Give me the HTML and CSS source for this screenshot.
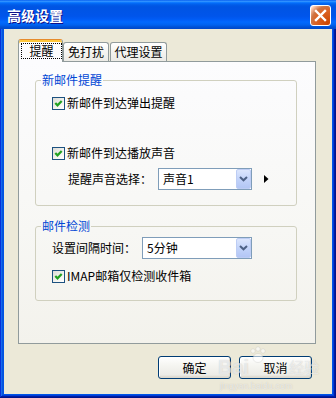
FILE: index.html
```html
<!DOCTYPE html>
<html lang="zh-CN">
<head>
<meta charset="utf-8">
<title>高级设置</title>
<link rel="stylesheet" href="styles.css">
</head>
<body>
<div class="window">
  <div class="titlebar">
    <span class="title">高级设置</span>
    <span class="close" aria-label="关闭">
      <svg width="19" height="19" viewBox="0 0 19 19"><path d="M5 5 L14 14 M14 5 L5 14" stroke="#fff" stroke-width="2.4" stroke-linecap="square" fill="none"/></svg>
    </span>
  </div>
  <div class="client">
    <div class="tabs">
      <div class="tab active"><span class="focus">提醒</span></div>
      <div class="tab t2">免打扰</div>
      <div class="tab t3">代理设置</div>
    </div>
    <div class="panel">
      <fieldset class="group g1">
        <legend>新邮件提醒</legend>
        <div class="row r1">
          <span class="cb"><svg width="11" height="11" viewBox="0 0 11 11"><polyline points="2.3,5 4.5,7.3 8.7,3" fill="none" stroke="#21A121" stroke-width="2.2"/></svg></span>
          <span>新邮件到达弹出提醒</span>
        </div>
        <div class="row r2">
          <span class="cb"><svg width="11" height="11" viewBox="0 0 11 11"><polyline points="2.3,5 4.5,7.3 8.7,3" fill="none" stroke="#21A121" stroke-width="2.2"/></svg></span>
          <span>新邮件到达播放声音</span>
        </div>
        <div class="row sound">
          <span class="lbl">提醒声音选择：</span>
          <div class="select s1">
            <span>声音1</span>
            <span class="drop"><svg width="9" height="6" viewBox="0 0 9 6"><polyline points="1,1 4.5,4.3 8,1" fill="none" stroke="#4D6185" stroke-width="2"/></svg></span>
          </div>
          <svg class="play" width="5" height="8" viewBox="0 0 5 8"><polygon points="0,0 4.5,4 0,8" fill="#000"/></svg>
        </div>
      </fieldset>
      <fieldset class="group g2">
        <legend>邮件检测</legend>
        <div class="row interval">
          <span class="lbl">设置间隔时间：</span>
          <div class="select s2">
            <span>5分钟</span>
            <span class="drop"><svg width="9" height="6" viewBox="0 0 9 6"><polyline points="1,1 4.5,4.3 8,1" fill="none" stroke="#4D6185" stroke-width="2"/></svg></span>
          </div>
        </div>
        <div class="row imap">
          <span class="cb"><svg width="11" height="11" viewBox="0 0 11 11"><polyline points="2.3,5 4.5,7.3 8.7,3" fill="none" stroke="#21A121" stroke-width="2.2"/></svg></span>
          <span>IMAP邮箱仅检测收件箱</span>
        </div>
      </fieldset>
    </div>
    <div class="btns">
      <button class="btn">确定</button>
      <button class="btn">取消</button>
    </div>
  </div>
  <div class="watermark">
    <div class="wm-top">
      <span class="wm-bai">Bai</span>
      <svg class="wm-paw" width="18" height="18" viewBox="0 0 18 18">
        <circle cx="4" cy="5" r="2.2"/><circle cx="9" cy="3" r="2.2"/><circle cx="14" cy="5" r="2.2"/>
        <ellipse cx="9" cy="12" rx="5" ry="4.5"/>
      </svg>
      <span class="wm-jy">经验</span>
    </div>
    <span class="wm-url">jingyan.baidu.com</span>
  </div>
</div>
</body>
</html>
```

FILE: styles.css
```css
html, body {
  margin: 0;
  padding: 0;
}

body {
  width: 336px;
  height: 398px;
  overflow: hidden;
  font-family: "Noto Sans CJK SC", "Noto Sans", sans-serif;
  font-size: 12px;
  line-height: 14px;
  color: #000;
  background: #ECE9D8;
}

.window {
  position: relative;
  box-sizing: border-box;
  width: 336px;
  height: 398px;
  display: flex;
  flex-direction: column;
  padding: 0 4px 4px;
  background: #0055E5;
  box-shadow: inset -1px -1px #00138c, inset 1px 1px #0831d9,
              inset -2px -2px #001ea0, inset 2px 2px #166aee,
              inset -3px -3px #003bda, inset 3px 3px #0855dd;
}

.titlebar {
  height: 29px;
  margin: 0 -4px;
  box-sizing: border-box;
  display: flex;
  align-items: flex-start;
  justify-content: space-between;
  padding: 0 5px 0 7px;
  background: linear-gradient(180deg, #0058ee 0%, #3593ff 4%, #288eff 6%, #127dff 8%,
              #036ffc 10%, #0262ee 14%, #0057e5 20%, #0054e3 24%, #0055eb 56%,
              #005bf5 66%, #026afe 76%, #0062ef 86%, #0052d6 93%, #0048c8 100%);
}

.title {
  color: #fff;
  font-weight: bold;
  font-size: 14px;
  line-height: 16px;
  padding-top: 7px;
  text-shadow: 1px 1px #0f1089;
}

.close {
  margin-top: 5px;
  width: 21px;
  height: 21px;
  box-sizing: border-box;
  border: 1px solid #fff;
  border-radius: 3px;
  background: radial-gradient(circle at 90% 90%, #cc4600 0, #dc6527 55%, #cd7546 70%, #ffccb2 90%, #fff 100%);
  display: flex;
  align-items: center;
  justify-content: center;
}

.close svg {
  display: block;
}

.client {
  flex: 1;
  background: #ECE9D8;
  padding: 10px 16px 0 14px;
  display: flex;
  flex-direction: column;
}

.tabs {
  display: flex;
  align-items: flex-end;
  height: 22px;
}

.tab {
  box-sizing: border-box;
  height: 19px;
  border: 1px solid #919B9C;
  border-bottom: none;
  border-radius: 3px 3px 0 0;
  background: linear-gradient(180deg, #fff 0%, #F6F6F3 40%, #ECEBE6 100%);
  text-align: center;
  line-height: 17px;
}

.t2 {
  width: 46px;
}

.t3 {
  width: 57px;
  margin-left: 1px;
}

.tab.active {
  position: relative;
  z-index: 1;
  width: 45px;
  height: 23px;
  margin-bottom: -1px;
  border-top: 1px solid #E68B2C;
  box-shadow: inset 0 2px #FFC73C;
  background: #FCFCFE;
  padding: 3px 0 0 2px;
  line-height: 14px;
}

.focus {
  display: block;
  box-sizing: border-box;
  width: 41px;
  height: 16px;
  border: 1px dotted #000;
  text-align: center;
}

.panel {
  box-sizing: border-box;
  height: 283px;
  border: 1px solid #919B9C;
  background: linear-gradient(180deg, #FCFCFE 0%, #F7F7F4 60%, #F3F2EC 100%);
  padding: 11px 0 0 16px;
}

.group {
  margin: 0;
  padding: 0 0 15px;
  width: 262px;
  box-sizing: border-box;
  border: 1px solid #D0D0BF;
  border-radius: 3px;
}

.group legend {
  margin-left: 5px;
  padding: 0 1px;
  color: #0046D5;
  line-height: 14px;
}

.g2 {
  margin-top: 13px;
  padding-bottom: 16px;
}

.row {
  display: flex;
  align-items: center;
  height: 16px;
  padding-left: 16px;
}

.r1 {
  margin-top: 8px;
}

.r2 {
  margin-top: 34px;
}

.sound {
  margin-top: 7px;
  height: 22px;
  padding-left: 32px;
}

.interval {
  margin-top: 4px;
  height: 22px;
}

.imap {
  margin-top: 9px;
}

.lbl {
  width: 90px;
  flex: none;
}

.cb {
  flex: none;
  width: 13px;
  height: 13px;
  box-sizing: border-box;
  border: 1px solid #1C5180;
  background: linear-gradient(135deg, #DCDCD7 0%, #F4F4F0 60%, #fff 100%);
  margin-right: 2px;
  display: flex;
}

.cb svg {
  display: block;
}

.select {
  box-sizing: border-box;
  height: 22px;
  border: 1px solid #7F9DB9;
  background: #fff;
  display: flex;
  align-items: center;
  justify-content: space-between;
  padding-left: 4px;
}

.s1 {
  width: 94px;
}

.s2 {
  width: 110px;
}

.drop {
  width: 15px;
  height: 20px;
  box-sizing: border-box;
  border: 1px solid #BDCDF4;
  border-radius: 2px;
  background: linear-gradient(180deg, #DCE6FD 0%, #C3D4FA 50%, #B3C6F5 100%);
  display: flex;
  align-items: center;
  justify-content: center;
}

.drop svg {
  display: block;
}

.play {
  display: block;
  margin-left: 12px;
}

.btns {
  display: flex;
  justify-content: flex-end;
  gap: 8px;
  margin-top: 12px;
  padding-right: 4px;
}

.btn {
  width: 73px;
  height: 23px;
  box-sizing: border-box;
  border: 1px solid #003C74;
  border-radius: 3px;
  background: linear-gradient(180deg, #fff 0%, #F5F5F1 40%, #ECEBE6 85%, #D6D0C5 100%);
  box-shadow: inset -1px -1px #DDD8CC, inset 1px 1px #fff;
  font: inherit;
  color: #000;
  padding: 0;
}

.watermark {
  position: absolute;
  left: 218px;
  top: 345px;
  display: flex;
  flex-direction: column;
  align-items: flex-start;
  pointer-events: none;
  color: rgba(255, 255, 255, 0.6);
  text-shadow: 0 0 1px rgba(110, 110, 110, 0.35);
}

.wm-top {
  display: flex;
  align-items: flex-start;
  height: 36px;
}

.wm-bai {
  font-family: "Liberation Sans", sans-serif;
  font-size: 20px;
  line-height: 22px;
  font-weight: bold;
  margin-top: 11px;
}

.wm-paw {
  display: block;
  margin: 1px 0 0 0;
  fill: rgba(255, 255, 255, 0.6);
  stroke: rgba(150, 150, 150, 0.3);
  stroke-width: 0.6;
}

.wm-jy {
  font-size: 15px;
  line-height: 17px;
  margin: 13px 0 0 22px;
}

.wm-url {
  font-family: "Liberation Sans", sans-serif;
  font-size: 9px;
  line-height: 10px;
  margin-left: 2px;
}
```
